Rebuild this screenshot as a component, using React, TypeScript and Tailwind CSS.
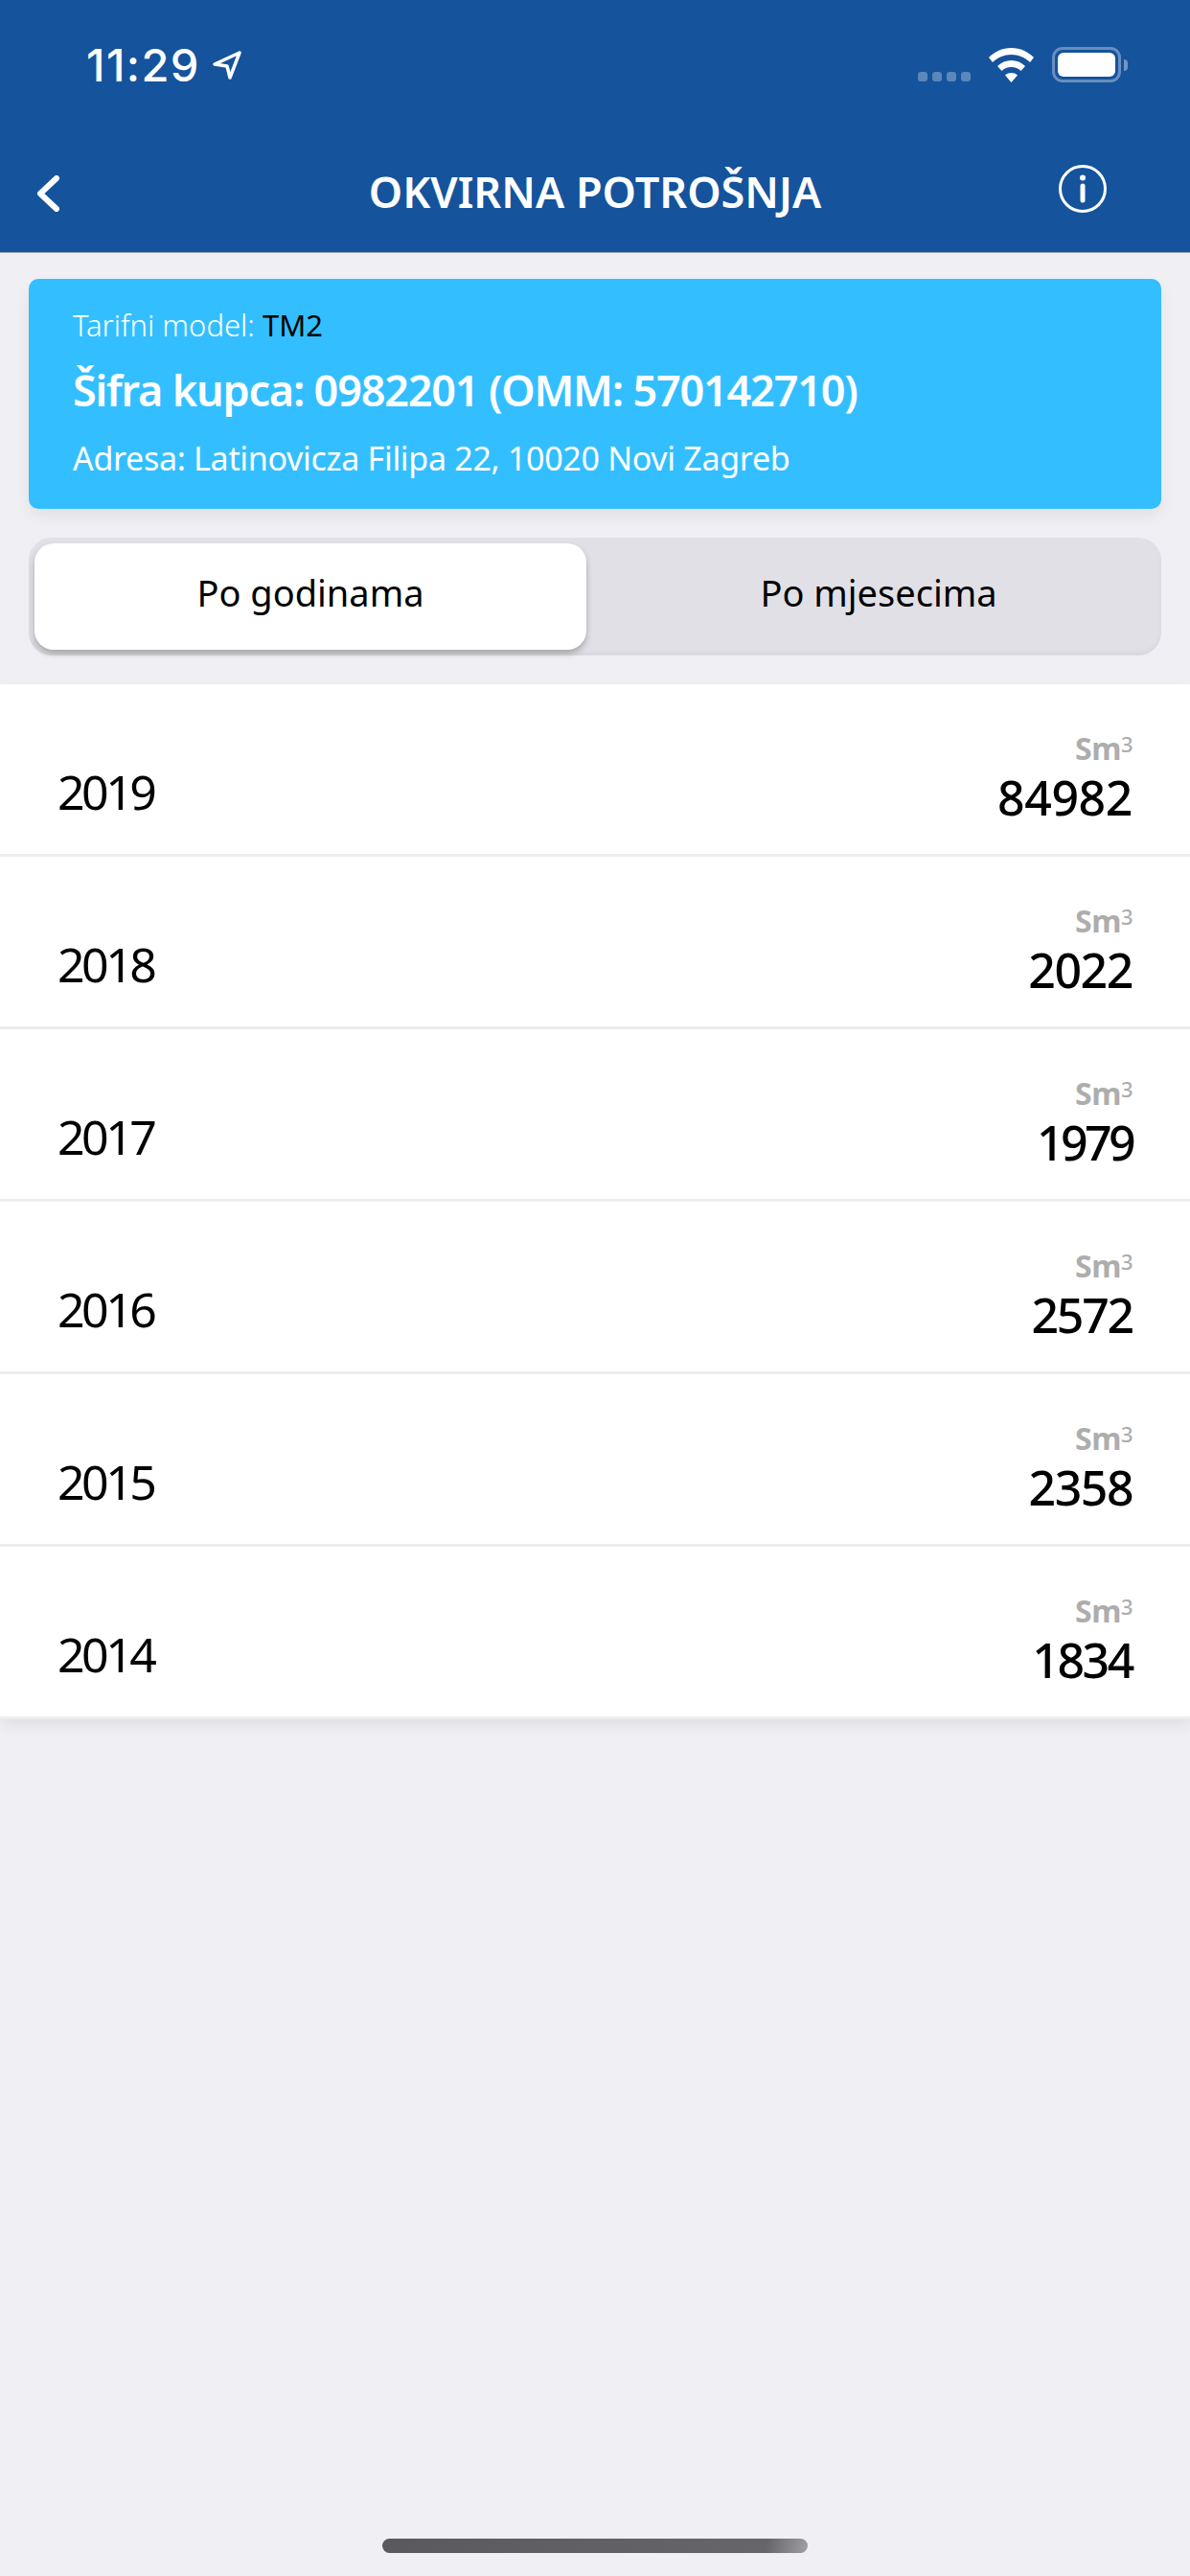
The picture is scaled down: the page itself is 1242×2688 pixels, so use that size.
import React from 'react';

// tracking per row: the numbers with a narrow 1 run tighter
const rows = [
  { year: '2019', value: '84982', tight: 'tracking-[-0.4px]' },
  { year: '2018', value: '2022', tight: 'tracking-[-1.4px]' },
  { year: '2017', value: '1979', tight: 'tracking-[-3.6px]' },
  { year: '2016', value: '2572', tight: 'tracking-[-2.2px]' },
  { year: '2015', value: '2358', tight: 'tracking-[-1.5px]' },
  { year: '2014', value: '1834', tight: 'tracking-[-2.4px]' },
];

const StatusBar = () => (
  <div className="flex h-[132px] items-start justify-between pl-[90px] pr-[65px] pt-[46px]">
    <div className="flex items-center gap-[12px]">
      <span className="font-['Inter',sans-serif] text-[47px] leading-[44px] font-medium tracking-[1.4px] text-white">11:29</span>
      <svg width="32" height="32" viewBox="0 0 32 32" fill="none">
        <path d="M29 3 L3 15 L16 17 L19 29 Z" stroke="white" strokeWidth="3.5" strokeLinejoin="round" />
      </svg>
    </div>
    <div className="flex items-end gap-[19px] pt-[3px]">
      <div className="flex gap-[5px] pb-[1px]">
        {[0, 1, 2, 3].map((i) => (
          <div key={i} className="h-[10px] w-[10px] rounded-[3px] bg-white/30" />
        ))}
      </div>
      <svg width="47" height="36" viewBox="0 0 47 36" fill="white">
        <path d="M23.5 0 C33 0 41 4 47 10 L43 15 C38 10 31 7 23.5 7 C16 7 9 10 4 15 L0 10 C6 4 14 0 23.5 0 Z" />
        <path d="M23.5 13 C29 13 34 15 38 19 L33.5 24 C31 21.5 27.5 20 23.5 20 C19.5 20 16 21.5 13.5 24 L9 19 C13 15 18 13 23.5 13 Z" />
        <path d="M23.5 26 C26.5 26 28.5 27 30 28.5 L23.5 36 L17 28.5 C18.5 27 20.5 26 23.5 26 Z" />
      </svg>
      <div className="flex items-center">
        <div className="flex h-[37px] w-[72px] items-center justify-center rounded-[11px] border-[3px] border-white/35">
          <div className="h-[25px] w-[60px] rounded-[6px] bg-white" />
        </div>
        <div className="ml-[3px] h-[12px] w-[4px] rounded-r-[4px] bg-white/40" />
      </div>
    </div>
  </div>
);

const NavBar = () => (
  <div className="relative flex h-[131px] items-start justify-between pl-[37px] pr-[87px] pt-[40px]">
    <svg width="26" height="38" viewBox="0 0 26 38" fill="none" className="mt-[11px]">
      <path d="M22 3 L5 19 L22 35" stroke="white" strokeWidth="6" strokeLinecap="round" strokeLinejoin="round" />
    </svg>
    <span className="absolute left-0 right-0 top-[38px] text-center text-[45px] leading-[60px] font-semibold text-white">
      OKVIRNA POTROŠNJA
    </span>
    <svg width="50" height="50" viewBox="0 0 50 50" fill="none">
      <circle cx="25" cy="25" r="23.5" stroke="white" strokeWidth="3" />
      <circle cx="25" cy="13.5" r="3" fill="white" />
      <path d="M25 22 V37" stroke="white" strokeWidth="5" strokeLinecap="round" />
    </svg>
  </div>
);

export default function App() {
  return (
    <div className="flex h-[2688px] w-[1242px] flex-col bg-[#EFEFF4] font-['Noto_Sans',sans-serif] text-black">
      <header className="h-[264px] border-b border-[#9aa0ac] bg-[#15539C]">
        <StatusBar />
        <NavBar />
      </header>

      {/* Customer info */}
      <div className="mx-[30px] mt-[27px] flex h-[240px] flex-col rounded-[10px] bg-[#33BFFF] pl-[46px] pt-[26px] shadow-[0_8px_16px_rgba(0,0,0,0.06)]">
        <div className="text-[31px] leading-[44px] font-light text-white">
          Tarifni model: <span className="font-normal text-black">TM2</span>
        </div>
        <div className="mt-[15px] text-[45px] leading-[62px] font-semibold tracking-[-1.2px] text-white">
          Šifra kupca: 0982201 (OMM: 570142710)
        </div>
        <div className="mt-[17px] text-[34px] leading-[46px] tracking-[-0.3px] text-white">
          Adresa: Latinovicza Filipa 22, 10020 Novi Zagreb
        </div>
      </div>

      {/* Segmented control */}
      <div className="mx-[30px] mt-[30px] flex h-[123px] rounded-[24px] bg-[#E0E0E6] p-[6px] shadow-[inset_0_-4px_4px_rgba(0,0,0,0.03)]">
        <div className="flex h-[111px] w-[576px] items-center justify-center rounded-[20px] bg-white pb-[8px] text-[38px] shadow-[0_4px_6px_rgba(0,0,0,0.25)]">
          Po godinama
        </div>
        <div className="flex flex-1 items-center justify-center pb-[8px] pl-[16px] text-[38px]">
          Po mjesecima
        </div>
      </div>

      {/* Yearly list */}
      <div className="mt-[30px] bg-white shadow-[0_6px_14px_rgba(0,0,0,0.07)]">
        {rows.map((row) => (
          <div
            key={row.year}
            className="flex h-[180px] items-end justify-between border-b-[3px] border-[#EDEDF0] pl-[60px] pr-[60px] pb-[31px]"
          >
            <span className="pb-[2px] text-[50px] leading-[64px] tracking-[-3.5px]">{row.year}</span>
            <div className="flex flex-col items-end">
              <span className="text-[32px] leading-[36px] font-bold tracking-[-0.5px] text-[#ADADAD]">
                Sm<sup className="top-[-8px] text-[22px] leading-none font-medium">3</sup>
              </span>
              <span className={`mt-[5px] text-[50px] leading-[56px] font-medium ${row.tight}`}>{row.value}</span>
            </div>
          </div>
        ))}
      </div>

      {/* Home indicator */}
      <div className="mt-auto flex justify-center pb-[24px]">
        <div className="h-[15px] w-[444px] rounded-full bg-[linear-gradient(100deg,#5a5a5c_0%,#666668_90%,#a0a0a2_100%)]" />
      </div>
    </div>
  );
}
